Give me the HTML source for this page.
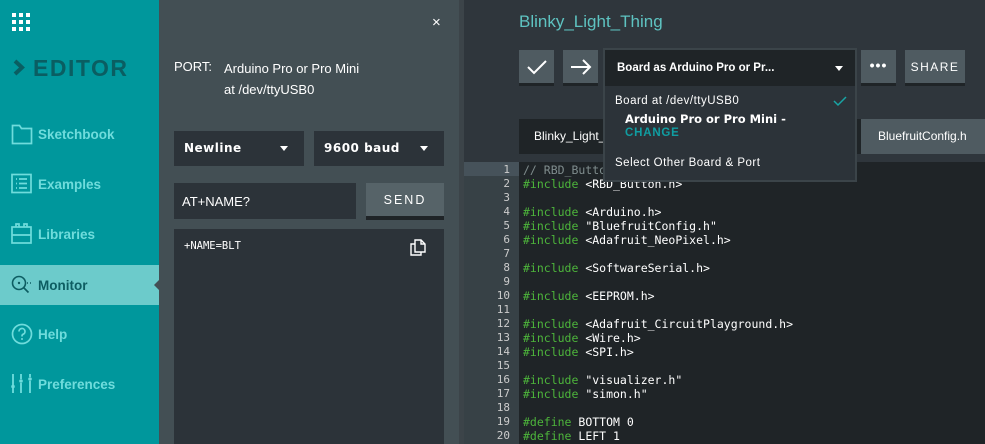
<!DOCTYPE html>
<html><head><meta charset="utf-8"><style>
*{margin:0;padding:0;box-sizing:border-box}
body{width:985px;height:444px;overflow:hidden;background:#2f363c;font-family:"Liberation Sans","DejaVu Sans",sans-serif;position:relative}
.a{position:absolute}
#side{left:0;top:0;width:159px;height:444px;background:#00979c}
.nav{position:absolute;left:0;width:159px;height:50px;color:#6fdcdc;font-weight:bold;font-size:13.5px;display:flex;align-items:center;padding-left:38px}
.nav svg{position:absolute;left:11px}
#panel{left:159px;top:0;width:300px;height:444px;background:#434f54;color:#fff}
.sel{position:absolute;height:35px;background:#2c3339;color:#fff;font-weight:bold;font-size:12px;letter-spacing:.5px;padding:10px 10px;font-family:"DejaVu Sans",sans-serif}
.tri{position:absolute;right:16px;top:15px;border:4px solid transparent;border-top:5px solid #fff;border-bottom:0}
.mono{font-family:"DejaVu Sans Mono","Liberation Mono",monospace}
#code div{height:14px;line-height:14px}
.btn{position:absolute;top:50px;height:36px;background:#4f5b61;border-bottom:3px solid #1f2427}
</style></head><body>
<div id="side" class="a">
  <svg class="a" style="left:12px;top:13px" width="19" height="19" fill="#fff"><rect x="0" y="0" width="4" height="4"/><rect x="7" y="0" width="4" height="4"/><rect x="14" y="0" width="4" height="4"/><rect x="0" y="7" width="4" height="4"/><rect x="7" y="7" width="4" height="4"/><rect x="14" y="7" width="4" height="4"/><rect x="0" y="14" width="4" height="4"/><rect x="7" y="14" width="4" height="4"/><rect x="14" y="14" width="4" height="4"/></svg>
  <svg class="a" style="left:13px;top:59px" width="12" height="17"><path d="M2 2 L9 8.5 L2 15" stroke="#0a5e62" stroke-width="4" fill="none"/></svg>
  <div class="a" style="left:33px;top:55px;font-size:23px;font-weight:bold;letter-spacing:1.5px;color:#0a5e62">EDITOR</div>
  <div class="nav" style="top:109px"><svg width="22" height="22"><path d="M1.5 2.5h7l2 3h10v15h-19z" fill="none" stroke="#6fdcdc" stroke-width="1.7"/></svg>Sketchbook</div>
  <div class="nav" style="top:159px"><svg width="22" height="22"><rect x="1" y="1.5" width="19" height="18" fill="none" stroke="#6fdcdc" stroke-width="1.7"/><path d="M5 6h1M5 10.5h1M5 15h1M8 6h8M8 10.5h8M8 15h8" stroke="#6fdcdc" stroke-width="1.7"/></svg>Examples</div>
  <div class="nav" style="top:209px"><svg width="22" height="22"><rect x="1" y="4" width="19" height="16" fill="none" stroke="#6fdcdc" stroke-width="1.7"/><path d="M1 12h19M5 4v-3h3v3M13 4v-3h3v3" stroke="#6fdcdc" stroke-width="1.7" fill="none"/></svg>Libraries</div>
  <div class="nav" style="top:265px;height:40px;background:#6ccbcb;color:#0d5d62"><svg width="22" height="22"><circle cx="8" cy="9" r="6.5" fill="none" stroke="#0d5d62" stroke-width="1.6"/><circle cx="8" cy="9" r="1.2" fill="#0d5d62"/><path d="M12.5 13.5l5 5M16 9h1M19 9h1" stroke="#0d5d62" stroke-width="1.6"/></svg>Monitor</div>
  <div class="a" style="left:154px;top:280px;border:5px solid transparent;border-right:5px solid #434f54;border-left:0"></div>
  <div class="nav" style="top:309px"><svg width="22" height="22"><circle cx="11" cy="11" r="9.5" fill="none" stroke="#6fdcdc" stroke-width="1.7"/><path d="M8 8.5a3 3 0 1 1 4 2.8c-1 .4-1 1-1 2.2" stroke="#6fdcdc" stroke-width="1.7" fill="none"/><circle cx="11" cy="16" r="1" fill="#6fdcdc"/></svg>Help</div>
  <div class="nav" style="top:359px"><svg width="22" height="22"><path d="M2 1v11M2 15v5M10 1v5M10 10v10M19 1v3M19 8v12" stroke="#6fdcdc" stroke-width="1.8"/><circle cx="2" cy="13.5" r="1.8" fill="#6fdcdc"/><circle cx="10" cy="8" r="1.8" fill="#6fdcdc"/><circle cx="19" cy="6" r="1.8" fill="#6fdcdc"/></svg>Preferences</div>
</div>
<div id="panel" class="a">
  <div class="a" style="left:273px;top:14px;font-size:15px;color:#fff">×</div>
  <div class="a" style="left:15px;top:59px;font-size:13px">PORT:</div>
  <div class="a" style="left:65px;top:58px;font-size:13px;line-height:21px">Arduino Pro or Pro Mini<br>at /dev/ttyUSB0</div>
  <div class="sel" style="left:15px;top:131px;width:130px">Newline<div class="tri"></div></div>
  <div class="sel" style="left:155px;top:131px;width:130px">9600 baud<div class="tri"></div></div>
  <div class="a" style="left:15px;top:183px;width:182px;height:36px;background:#2c3339;font-size:13px;padding:11px 8px">AT+NAME?</div>
  <div class="a" style="left:207px;top:183px;width:78px;height:37px;background:#566368;border-bottom:4px solid #1f2427;font-size:12.5px;letter-spacing:2px;text-align:center;padding-top:10px">SEND</div>
  <div class="a" style="left:15px;top:229px;width:270px;height:215px;background:#2c3339"></div>
  <div class="a mono" style="left:25px;top:240px;font-size:10.5px">+NAME=BLT</div>
  <svg class="a" style="left:250px;top:239px" width="17" height="17"><path d="M6 1h6l4 4v8h-10z" fill="none" stroke="#fff" stroke-width="1.4"/><path d="M12 1v4h4M6 5h-4v11h10v-3" fill="none" stroke="#fff" stroke-width="1.4"/></svg>
</div>
<div class="a" style="left:459px;top:0;width:5px;height:444px;background:#3c4449"></div>
<div class="a" style="left:519px;top:12px;font-size:17px;color:#5ec3c1">Blinky_Light_Thing</div>
<div class="btn" style="left:519px;width:35px"><svg width="35" height="33"><path d="M9 17l6 6 12-12" stroke="#fff" stroke-width="2" fill="none"/></svg></div>
<div class="btn" style="left:563px;width:35px"><svg width="35" height="33"><path d="M8 17h19M20 10l7 7-7 7" stroke="#fff" stroke-width="2" fill="none"/></svg></div>
<div class="btn" style="left:861px;width:35px;color:#fff;text-align:center;font-size:14px;font-weight:bold;line-height:30px;letter-spacing:1px">•••</div>
<div class="btn" style="left:905px;width:60px;color:#fff;text-align:center;font-size:12px;letter-spacing:1.5px;line-height:34px">SHARE</div>
<div class="a" style="left:519px;top:119px;width:342px;height:35px;background:#1f2427"></div>
<div class="a" style="left:534px;top:129px;font-size:12px;color:#fff">Blinky_Light_</div>
<div class="a" style="left:861px;top:119px;width:124px;height:35px;background:#4f5b61;color:#fff;font-size:12px;padding:10px 0 0 17px">BluefruitConfig.h</div>
<div class="a" style="left:464px;top:154px;width:521px;height:8px;background:#2f363c"></div>
<div class="a" style="left:464px;top:162px;width:55px;height:282px;background:#374146"></div>
<div class="a" style="left:519px;top:162px;width:466px;height:282px;background:#1f2427"></div>
<div class="a" style="left:464px;top:162px;width:55px;height:14px;background:#46525a"></div>
<div class="a mono" style="left:464px;top:163px;width:46px;text-align:right;font-size:11px;color:#ccc;line-height:14px" id="gut"></div>
<div class="a mono" id="code" style="left:523px;top:163px;font-size:11.5px;color:#fff;white-space:pre"><div style="color:#7f8c8d">// RBD_Button</div><div><span style="color:#4db53b">#include</span> &lt;RBD_Button.h&gt;</div><div> </div><div><span style="color:#4db53b">#include</span> &lt;Arduino.h&gt;</div><div><span style="color:#4db53b">#include</span> "BluefruitConfig.h"</div><div><span style="color:#4db53b">#include</span> &lt;Adafruit_NeoPixel.h&gt;</div><div> </div><div><span style="color:#4db53b">#include</span> &lt;SoftwareSerial.h&gt;</div><div> </div><div><span style="color:#4db53b">#include</span> &lt;EEPROM.h&gt;</div><div> </div><div><span style="color:#4db53b">#include</span> &lt;Adafruit_CircuitPlayground.h&gt;</div><div><span style="color:#4db53b">#include</span> &lt;Wire.h&gt;</div><div><span style="color:#4db53b">#include</span> &lt;SPI.h&gt;</div><div> </div><div><span style="color:#4db53b">#include</span> "visualizer.h"</div><div><span style="color:#4db53b">#include</span> "simon.h"</div><div> </div><div><span style="color:#4db53b">#define</span> BOTTOM 0</div><div><span style="color:#4db53b">#define</span> LEFT 1</div></div>
<div class="a" style="left:603px;top:48px;width:254px;height:134px;border:2px solid #3b4449;background:#2c3339"></div>
<div class="a" style="left:605px;top:50px;width:250px;height:36px;background:#1f2427;color:#fff;font-weight:bold;font-size:11.5px;padding:12px 12px;font-family:"DejaVu Sans",sans-serif">Board as Arduino Pro or Pr...<div class="tri" style="right:12px;top:16px"></div></div>
<div class="a" style="left:615px;top:95px;font-size:11.5px;color:#fff;letter-spacing:.5px">Board at /dev/ttyUSB0</div>
<svg class="a" style="left:832px;top:95px" width="16" height="12"><path d="M2 6l4 4 8-8" stroke="#18a5a5" stroke-width="1.5" fill="none"/></svg>
<div class="a" style="left:625px;top:112px;font-size:11.5px;color:#fff;font-weight:bold;font-family:'DejaVu Sans',sans-serif">Arduino Pro or Pro Mini -</div>
<div class="a" style="left:625px;top:127px;font-size:11.5px;color:#109ea2;font-weight:bold;letter-spacing:.8px">CHANGE</div>
<div class="a" style="left:615px;top:157px;font-size:11.5px;color:#fff;letter-spacing:.5px">Select Other Board &amp; Port</div>
<script>var g='';for(var i=1;i<=20;i++)g+='<div>'+i+'</div>';document.getElementById('gut').innerHTML=g;</script>
</body></html>
